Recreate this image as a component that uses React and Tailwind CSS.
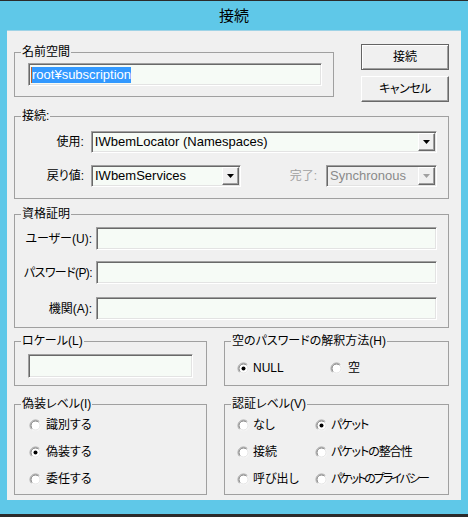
import React from "react";

function Group({ label, className, children }) {
  return (
    <div className={`relative border border-[#a0a0a0] ${className}`}>
      <span className="absolute -top-[9px] left-[6px] bg-[#f0f0f0] px-px text-[12px] leading-[16px] whitespace-nowrap">
        {label}
      </span>
      {children}
    </div>
  );
}

// sunken 3D edit box
function Field({ className, children }) {
  return (
    <div
      className={`flex items-center border border-t-[#a0a0a0] border-l-[#a0a0a0] border-r-white border-b-white shadow-[inset_1px_1px_0_#696969,inset_-1px_-1px_0_#e3e3e3] ${className}`}
    >
      {children}
    </div>
  );
}

function DropButton({ disabled }) {
  return (
    <div className="ml-auto mr-px flex h-[calc(100%-2px)] w-[17px] items-center justify-center border border-t-white border-l-white border-r-[#696969] border-b-[#696969] bg-[#f0f0f0] shadow-[inset_-1px_-1px_0_#a0a0a0]">
      <svg width="7" height="4" viewBox="0 0 7 4">
        <path d="M0 0h7L3.5 4z" fill={disabled ? "#a0a0a0" : "#000"} />
      </svg>
    </div>
  );
}

function Radio({ checked }) {
  return (
    <svg width="13" height="13" viewBox="0 0 13 13" className="shrink-0">
      <circle cx="6.5" cy="6.5" r="5.5" fill="#fff" />
      <path d="M2.6 10.4A5.5 5.5 0 0 1 10.4 2.6" fill="none" stroke="#a0a0a0" />
      <path d="M10.4 2.6A5.5 5.5 0 0 1 2.6 10.4" fill="none" stroke="#f4f4f4" />
      <path d="M3.3 9.7A4.5 4.5 0 0 1 9.7 3.3" fill="none" stroke="#7a7a7a" />
      <path d="M9.7 3.3A4.5 4.5 0 0 1 3.3 9.7" fill="none" stroke="#e3e3e3" />
      {checked && <circle cx="6.5" cy="6.5" r="2" fill="#000" />}
    </svg>
  );
}

function Option({ checked, gap, className, textClass, children }) {
  return (
    <div className={`flex h-[16px] items-center ${gap} ${className || ""}`}>
      <Radio checked={checked} />
      <span className={`text-[12px] leading-[16px] whitespace-nowrap ${textClass || ""}`}>{children}</span>
    </div>
  );
}

export default function App() {
  return (
    <div className="h-[517px] w-[468px] bg-[#2b2b2b] pt-px text-black font-['Liberation_Sans','Noto_Sans_CJK_JP',sans-serif] [font-feature-settings:'palt']">
      <div className="flex h-[513px] flex-col bg-[#5fc8e8]">
        <div className="flex h-[29px] items-center justify-center pt-[2px] text-[15px]">接続</div>

        <div className="mx-[7px] h-[470px] border-t border-[#9fd3e6] bg-[#f0f0f0] pl-[7px] pr-[12px]">
          {/* namespace + buttons */}
          <div className="flex items-start justify-between pt-[13px]">
            <Group label="名前空間" className="mt-[8px] h-[45px] w-[320px] pl-[13px] pt-[10px]">
              <Field className="h-[23px] w-[294px] bg-[#f6fbf6] pl-[3px]">
                <span className="relative bg-[#3399ff] text-[13px] leading-[16px] text-white">
                  <span className="absolute -left-px top-0 h-[16px] w-px bg-[#c0602a]" />
                  root¥subscription
                </span>
              </Field>
            </Group>
            <div className="flex flex-col gap-[6px]">
              <button className="h-[26px] w-[88px] border border-[#646464] bg-[#f0f0f0] text-[12px] shadow-[inset_1px_1px_0_#fff,inset_-1px_-1px_0_#a0a0a0]">
                接続
              </button>
              <button className="h-[26px] w-[88px] border border-t-white border-l-white border-r-[#696969] border-b-[#696969] bg-[#f0f0f0] text-[12px] tracking-[-0.5px] shadow-[inset_-1px_-1px_0_#a0a0a0]">
                キャンセル
              </button>
            </div>
          </div>

          {/* connection */}
          <Group label="接続:" className="mt-[14px] h-[83px] pr-[11px] pt-[14px]">
            <div className="flex h-[22px] items-center">
              <span className="w-[69px] text-right text-[12px]">使用:</span>
              <Field className="ml-[7px] h-[22px] w-[347px] bg-[#f6fbf6] pl-[3px]">
                <span className="text-[13px]">IWbemLocator (Namespaces)</span>
                <DropButton />
              </Field>
            </div>
            <div className="mt-[12px] flex h-[22px] items-center">
              <span className="w-[69px] text-right text-[12px]">戻り値:</span>
              <Field className="ml-[7px] h-[22px] w-[150px] bg-[#f6fbf6] pl-[3px]">
                <span className="text-[13px]">IWbemServices</span>
                <DropButton />
              </Field>
              <span className="ml-auto text-[12px] text-[#a0a0a0]">完了:</span>
              <Field className="ml-[9px] h-[22px] w-[111px] bg-[#f0f0f0] pl-[3px]">
                <span className="text-[13px] text-[#8a8a8a]">Synchronous</span>
                <DropButton disabled />
              </Field>
            </div>
          </Group>

          {/* credentials */}
          <Group label="資格証明" className="mt-[15px] h-[114px] pt-[12px]">
            <div className="flex h-[23px] items-center">
              <span className="w-[77px] text-right text-[12px] whitespace-nowrap">ユーザー(U):</span>
              <Field className="ml-[4px] h-[23px] w-[341px] bg-[#f6fbf6]" />
            </div>
            <div className="mt-[11px] flex h-[23px] items-center">
              <span className="w-[77px] text-right text-[12px] tracking-[-0.6px] whitespace-nowrap">パスワード(P):</span>
              <Field className="ml-[4px] h-[23px] w-[341px] bg-[#f6fbf6]" />
            </div>
            <div className="mt-[13px] flex h-[23px] items-center">
              <span className="w-[77px] text-right text-[12px] whitespace-nowrap">機関(A):</span>
              <Field className="ml-[4px] h-[23px] w-[341px] bg-[#f6fbf6]" />
            </div>
          </Group>

          {/* locale + empty password */}
          <div className="mt-[13px] flex gap-[17px]">
            <Group label="ロケール(L)" className="h-[45px] w-[193px] pl-[13px] pt-[12px]">
              <Field className="h-[24px] w-[165px] bg-[#f6fbf6]" />
            </Group>
            <Group label="空のパスワードの解釈方法(H)" className="flex h-[45px] w-[225px] items-start pl-[12px] pt-[18px]">
              <Option checked gap="gap-[3px]" className="w-[93px]">NULL</Option>
              <Option gap="gap-[5px]">空</Option>
            </Group>
          </div>

          {/* impersonation + authentication */}
          <div className="mt-[18px] flex gap-[17px]">
            <Group label="偽装レベル(I)" className="flex h-[91px] w-[193px] flex-col gap-[11px] pl-[14px] pt-[12px]">
              <Option gap="gap-[4px]">識別する</Option>
              <Option checked gap="gap-[4px]">偽装する</Option>
              <Option gap="gap-[4px]">委任する</Option>
            </Group>
            <Group label="認証レベル(V)" className="grid h-[91px] w-[225px] grid-cols-[78px_1fr] content-start gap-y-[11px] pl-[12px] pt-[12px]">
              <Option gap="gap-[3px]">なし</Option>
              <Option checked gap="gap-[3px]" textClass="tracking-[-1px]">パケット</Option>
              <Option gap="gap-[3px]">接続</Option>
              <Option gap="gap-[3px]" textClass="tracking-[-1px]">パケットの整合性</Option>
              <Option gap="gap-[3px]">呼び出し</Option>
              <Option gap="gap-[3px]" textClass="tracking-[-2px]">パケットのプライバシー</Option>
            </Group>
          </div>
        </div>
      </div>
    </div>
  );
}
